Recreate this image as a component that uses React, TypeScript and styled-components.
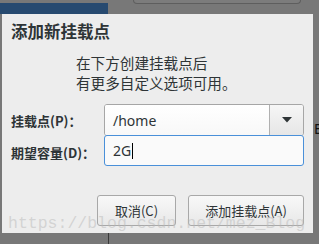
import React from "react";
import styled, { createGlobalStyle } from "styled-components";

const Global = createGlobalStyle`
  html, body { margin: 0; padding: 0; background: #787878; }
  body { font-family: "Noto Sans CJK SC", "Noto Sans", sans-serif; }
`;

const Page = styled.div`
  position: relative;
  width: 319px;
  height: 244px;
  overflow: hidden;
  background: #787878;
  display: flex;
  flex-direction: column;
`;

const TopStrip = styled.div`
  height: 14px;
  display: flex;
  align-items: flex-start;
  flex-shrink: 0;
`;

const BlueTab = styled.div`
  width: 108px;
  height: 11px;
  margin-top: 3px;
  background: #274a70;
`;

const WindowEdge = styled.div`
  width: 166px;
  height: 3px;
  margin-left: 25px;
  border: 1px solid #5e5e5e;
  border-top: none;
  border-radius: 0 0 4px 4px;
  background: #7c7c7c;
`;

const Middle = styled.div`
  display: flex;
  align-items: flex-start;
  flex-shrink: 0;
`;

const Dialog = styled.div`
  margin-left: 2px;
  width: 311px;
  height: 219px;
  background: #ededed;
  display: flex;
  flex-direction: column;
  box-sizing: border-box;
  padding: 7px 9px 0 9px;
  color: #2e3436;
`;

const SideText = styled.div`
  margin-left: 1px;
  padding-top: 107px;
  font-family: "Noto Sans", sans-serif;
  font-size: 14px;
  color: #111;
  line-height: 16px;
`;

const Title = styled.div`
  font-size: 16.5px;
  font-weight: bold;
  line-height: 20px;
`;

const Desc = styled.div`
  margin-top: 12px;
  padding-left: 65px;
  font-size: 14.6px;
  line-height: 20px;
  color: #2e3436;
`;

const Form = styled.div`
  margin-top: 11px;
  display: grid;
  grid-template-columns: 93px 200px;
  grid-auto-rows: 32px;
  align-items: center;
`;

const Label = styled.div`
  font-size: 13px;
  font-weight: bold;
  color: #2e3436;
  padding-top: 1px;
`;

const Combo = styled.div`
  height: 32px;
  box-sizing: border-box;
  display: flex;
  border: 1px solid #a6a6a6;
  border-radius: 3px;
  background: #fff;
  overflow: hidden;
`;

const ComboText = styled.div`
  flex: 1;
  padding-left: 8px;
  display: flex;
  align-items: center;
  font-family: "Noto Sans", sans-serif;
  font-size: 14px;
  color: #2e3436;
  background: linear-gradient(#ffffff, #f8f8f8);
`;

const ComboButton = styled.div`
  width: 33px;
  border-left: 1px solid #b0b0b0;
  display: flex;
  align-items: center;
  justify-content: center;
  background: linear-gradient(#f6f6f6, #e6e6e6);
`;

const Entry = styled.div`
  height: 31px;
  margin-top: -1px;
  align-self: start;
  box-sizing: border-box;
  border: 1px solid #4a90d9;
  border-radius: 3px;
  background: #fafafa;
  padding-left: 8px;
  display: flex;
  align-items: center;
  font-family: "Noto Sans", sans-serif;
  font-size: 14px;
  color: #2e3436;
`;

const Caret = styled.span`
  display: inline-block;
  width: 1px;
  height: 16px;
  background: #000;
  margin-left: 1px;
`;

const Buttons = styled.div`
  margin-top: 27px;
  display: flex;
  justify-content: flex-end;
  gap: 12px;
`;

const Button = styled.div<{ $w: number }>`
  width: ${(p) => p.$w}px;
  height: 31px;
  box-sizing: border-box;
  border: 1px solid #a8a8a8;
  border-radius: 3px;
  background: linear-gradient(#f8f8f8, #e8e8e8);
  display: flex;
  align-items: center;
  justify-content: center;
  font-size: 13px;
  color: #2e3436;
`;

const Bottom = styled.div`
  flex: 1;
  display: flex;
`;

const BottomLine = styled.div`
  margin-left: 108px;
  width: 1px;
  background: #3a3a3a;
`;

const Watermark = styled.div`
  position: absolute;
  left: 8px;
  top: 214px;
  font-family: "Liberation Mono", monospace;
  font-size: 16.5px;
  line-height: 20px;
  color: rgba(185, 185, 185, 0.5);
  pointer-events: none;
  white-space: nowrap;
`;

export default function App() {
  return (
    <Page>
      <Global />
      <TopStrip>
        <BlueTab />
        <WindowEdge />
      </TopStrip>
      <Middle>
        <Dialog>
          <Title>添加新挂载点</Title>
          <Desc>
            在下方创建挂载点后
            <br />
            有更多自定义选项可用。
          </Desc>
          <Form>
            <Label>挂载点(P)：</Label>
            <Combo>
              <ComboText>/home</ComboText>
              <ComboButton>
                <svg width="10" height="6" viewBox="0 0 10 6">
                  <path d="M0 0 H10 L5 5.5 Z" fill="#2e3436" />
                </svg>
              </ComboButton>
            </Combo>
            <Label>期望容量(D)：</Label>
            <Entry>
              2G
              <Caret />
            </Entry>
          </Form>
          <Buttons>
            <Button $w={79}>取消(C)</Button>
            <Button $w={116}>添加挂载点(A)</Button>
          </Buttons>
        </Dialog>
        <SideText>E</SideText>
      </Middle>
      <Bottom>
        <BottomLine />
      </Bottom>
      <Watermark>https://blog.csdn.net/mez_Blog</Watermark>
    </Page>
  );
}
